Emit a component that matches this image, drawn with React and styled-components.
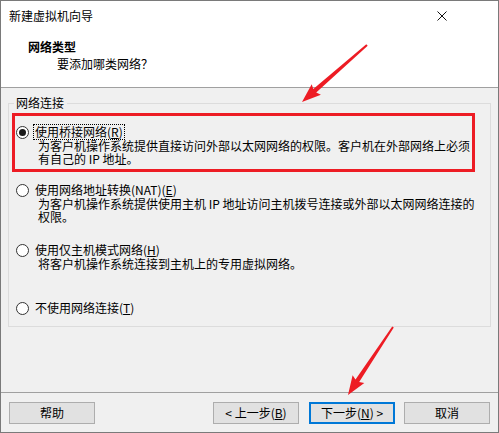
import styled, { createGlobalStyle } from 'styled-components'

const GlobalStyle = createGlobalStyle`
  html, body {
    margin: 0;
    padding: 0;
    background: #ffffff;
  }
  * {
    box-sizing: border-box;
  }
`

const Window = styled.div`
  position: relative;
  width: 499px;
  height: 433px;
  border: 1px solid #7a7a7a;
  background: #f0f0f0;
  display: flex;
  flex-direction: column;
  font-family: "Noto Sans CJK SC", "Noto Sans", sans-serif;
  font-size: 12px;
  color: #000;
`

const TitleBar = styled.div`
  height: 30px;
  background: #fff;
  display: flex;
  align-items: center;
  justify-content: space-between;
  padding: 0 0 0 8px;
  line-height: 14px;
`

const CloseButton = styled.div`
  width: 46px;
  height: 30px;
  display: flex;
  align-items: center;
  justify-content: center;
  margin-right: 33px;
`

const Header = styled.div`
  height: 57px;
  background: #fff;
  border-bottom: 1px solid #a0a0a0;
  padding: 9px 0 0 27px;
  line-height: 14px;
`

const HeaderTitle = styled.div`
  font-weight: bold;
`

const HeaderSub = styled.div`
  margin-top: 3px;
  padding-left: 29px;
`

const Body = styled.div`
  flex: 1;
  padding: 8px 8px 0 7px;
`

const Group = styled.fieldset`
  margin: 0;
  padding: 0;
  border: 1px solid #dcdcdc;
  height: 231px;
  display: grid;
  grid-template-rows: 58px 60px 58px auto;
  line-height: 14px;
`

const Legend = styled.legend`
  padding: 0 3px 0 2px;
  margin-left: 5px;
  line-height: 14px;
`

const Option = styled.div`
  position: relative;
  margin: 2px 15px 0 2px;
  padding: 13px 0 0 5px;

  &::after {
    content: '';
    display: ${({ $marked }) => ($marked ? 'block' : 'none')};
    position: absolute;
    left: 1px;
    right: 0;
    top: 1px;
    bottom: -4px;
    border: 3px solid #ed1c24;
    pointer-events: none;
  }
`

const OptionRow = styled.div`
  display: flex;
  align-items: center;
  gap: 4px;
  height: 14px;
`

const Radio = styled.span`
  width: 13px;
  height: 13px;
  border-radius: 50%;
  border: 1px solid #333;
  background: #fff;
  display: inline-flex;
  align-items: center;
  justify-content: center;
  flex-shrink: 0;

  &::after {
    content: '';
    width: 7px;
    height: 7px;
    border-radius: 50%;
    background: ${({ $checked }) => ($checked ? '#1a1a1a' : 'transparent')};
  }
`

const Label = styled.span`
  padding: 0 1px;
  border: 1px dotted ${({ $focused }) => ($focused ? '#000' : 'transparent')};
  line-height: 14px;
`

const Desc = styled.div`
  padding-left: 22px;
  line-height: 13px;
  white-space: nowrap;
`

const Footer = styled.div`
  height: 40px;
  border-top: 1px solid #a0a0a0;
  display: flex;
  align-items: flex-start;
  padding: 9px 8px 0 8px;
`

const Button = styled.div`
  width: 86px;
  height: 22px;
  background: #e1e1e1;
  border: ${({ $primary }) => ($primary ? '2px solid #0078d7' : '1px solid #adadad')};
  display: flex;
  align-items: center;
  justify-content: center;
  margin-left: ${({ $gap }) => $gap || '0'};
  line-height: 14px;
`

const Overlay = styled.svg`
  position: absolute;
  left: -1px;
  top: -1px;
  pointer-events: none;
`

function arrowPoints(tx, ty, px, py) {
  const len = Math.hypot(px - tx, py - ty)
  const dx = (px - tx) / len
  const dy = (py - ty) / len
  const nx = -dy
  const ny = dx
  const bx = px - dx * 17
  const by = py - dy * 17
  const pts = [
    [tx + nx * 1, ty + ny * 1],
    [bx + nx * 2.2, by + ny * 2.2],
    [bx - dx * 2 + nx * 7, by - dy * 2 + ny * 7],
    [px, py],
    [bx - dx * 2 - nx * 7, by - dy * 2 - ny * 7],
    [bx - nx * 2.2, by - ny * 2.2],
    [tx - nx * 1, ty - ny * 1],
  ]
  return pts.map((p) => p.map((v) => v.toFixed(1)).join(',')).join(' ')
}

const options = [
  {
    label: '使用桥接网络',
    key: 'R',
    desc: ['为客户机操作系统提供直接访问外部以太网网络的权限。客户机在外部网络上必须', '有自己的 IP 地址。'],
    checked: true,
  },
  {
    label: '使用网络地址转换(NAT)',
    key: 'E',
    desc: ['为客户机操作系统提供使用主机 IP 地址访问主机拨号连接或外部以太网网络连接的', '权限。'],
  },
  {
    label: '使用仅主机模式网络',
    key: 'H',
    desc: ['将客户机操作系统连接到主机上的专用虚拟网络。'],
  },
  {
    label: '不使用网络连接',
    key: 'T',
    desc: [],
  },
]

export default function App() {
  return (
    <>
      <GlobalStyle />
      <Window>
        <TitleBar>
          <span>新建虚拟机向导</span>
          <CloseButton>
            <svg width="10" height="10" viewBox="0 0 10 10">
              <path d="M0.5 0.5 L9.5 9.5 M9.5 0.5 L0.5 9.5" stroke="#111" strokeWidth="1" />
            </svg>
          </CloseButton>
        </TitleBar>
        <Header>
          <HeaderTitle>网络类型</HeaderTitle>
          <HeaderSub>要添加哪类网络？</HeaderSub>
        </Header>
        <Body>
          <Group>
            <Legend>网络连接</Legend>
            {options.map((o, i) => (
              <Option key={o.key} $marked={i === 0}>
                <OptionRow>
                  <Radio $checked={o.checked} />
                  <Label $focused={o.checked}>
                    {o.label}(<u>{o.key}</u>)
                  </Label>
                </OptionRow>
                {o.desc.map((line) => (
                  <Desc key={line}>{line}</Desc>
                ))}
              </Option>
            ))}
          </Group>
        </Body>
        <Footer>
          <Button>帮助</Button>
          <Button $gap="118px">
            &lt; 上一步(<u>B</u>)
          </Button>
          <Button $gap="10px" $primary>
            下一步(<u>N</u>) &gt;
          </Button>
          <Button $gap="9px">取消</Button>
        </Footer>
        <Overlay width="499" height="433">
          <polygon points={arrowPoints(367, 45, 302, 102)} fill="#ed1c24" />
          <polygon points={arrowPoints(393, 327, 348, 395)} fill="#ed1c24" />
        </Overlay>
      </Window>
    </>
  )
}
